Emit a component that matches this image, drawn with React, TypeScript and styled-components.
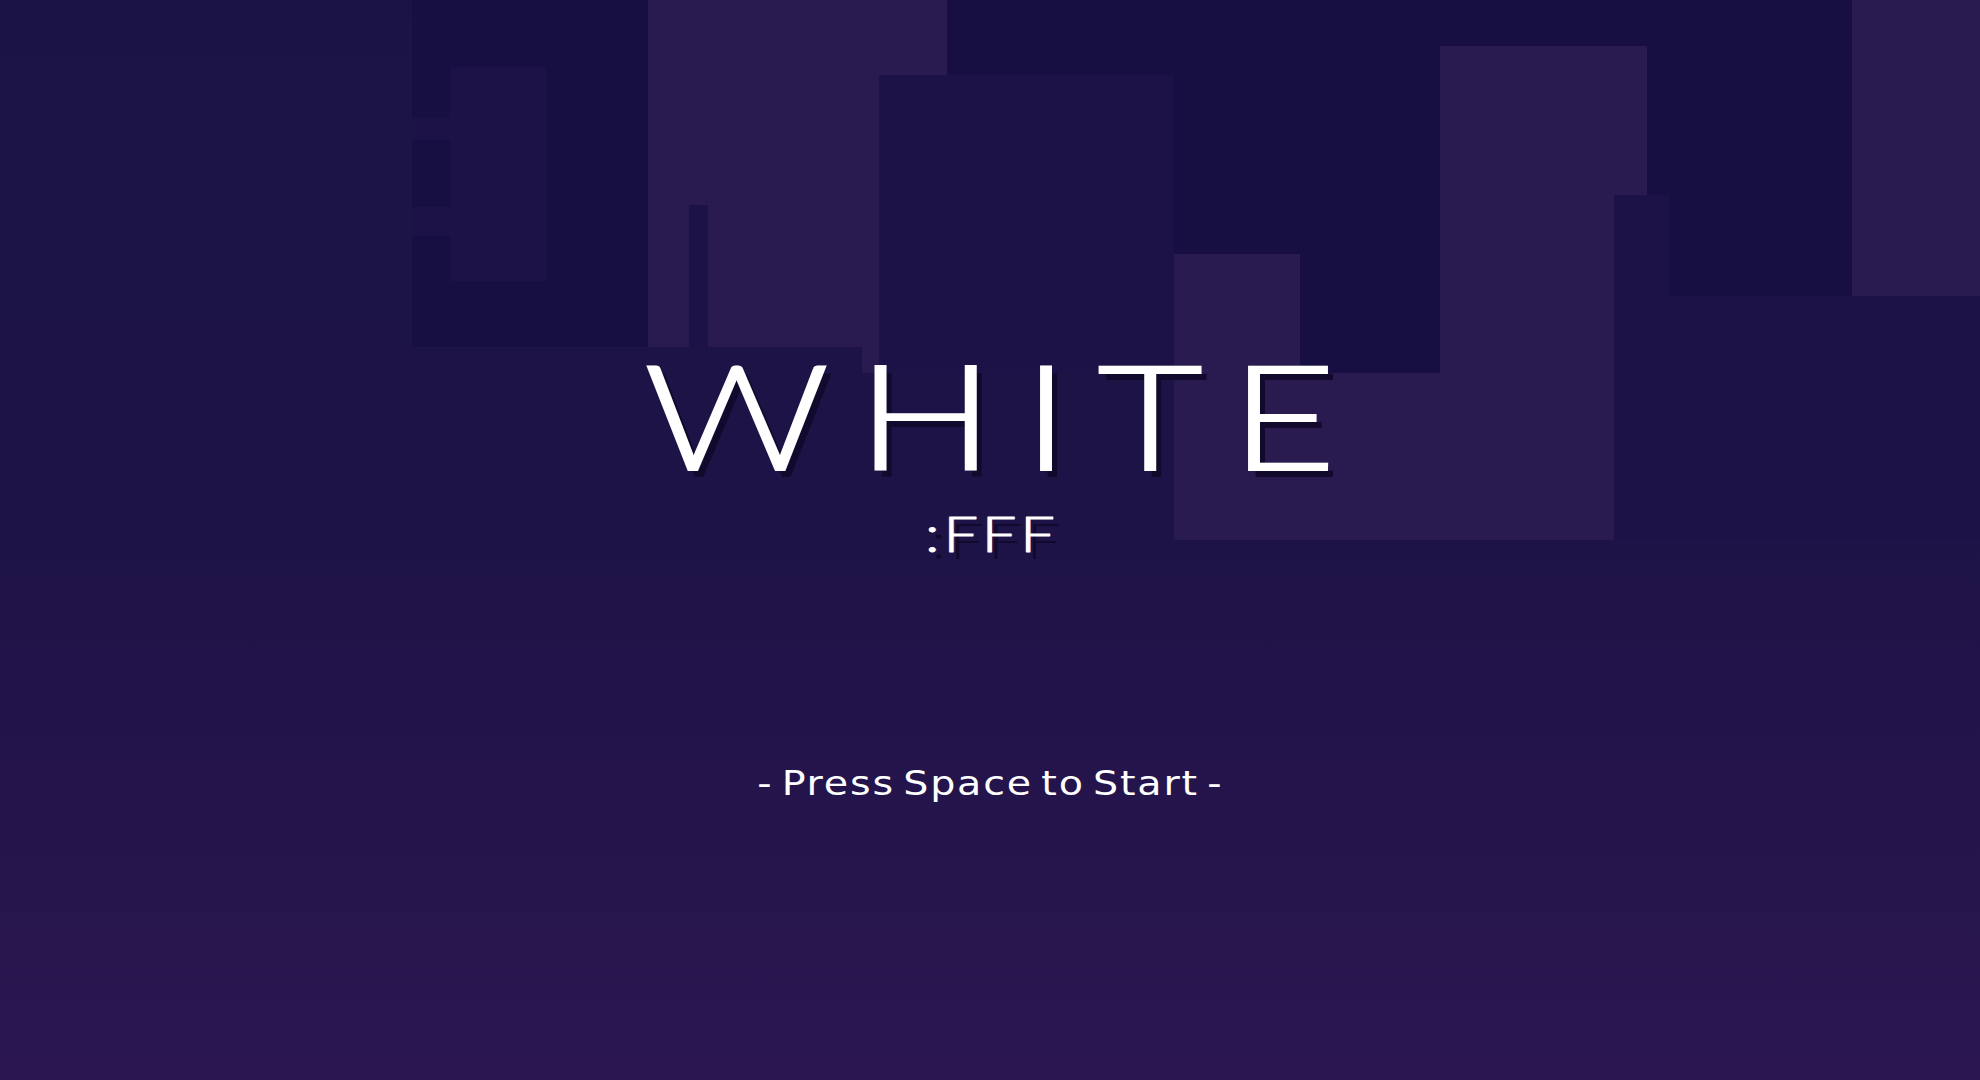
import React from "react";
import styled, { createGlobalStyle } from "styled-components";

const GlobalStyle = createGlobalStyle`
  html, body {
    margin: 0;
    padding: 0;
    background: #1b1346;
    overflow: hidden;
  }
  * { box-sizing: border-box; }
`;

type Tone = "dark" | "light" | "mid";

const toneColor: Record<Tone, string> = {
  dark: "#170e41",
  light: "#291a4f",
  mid: "#1d1247",
};

const Screen = styled.main`
  position: relative;
  width: 100vw;
  height: 100vh;
  overflow: hidden;
  background: linear-gradient(180deg, #1b1346 0%, #1e1347 50%, #2b1651 100%);
`;

const Skyline = styled.div`
  position: absolute;
  inset: 0;
  pointer-events: none;
`;

const Block = styled.div<{ $x: number; $y: number; $w: number; $h: number; $tone: Tone }>`
  position: absolute;
  left: ${(p) => p.$x}px;
  top: ${(p) => p.$y}px;
  width: ${(p) => p.$w}px;
  height: ${(p) => p.$h}px;
  background: ${(p) => toneColor[p.$tone]};
`;

const Content = styled.section`
  position: relative;
  z-index: 1;
  display: flex;
  flex-direction: column;
  align-items: center;
  padding-top: 341px;
`;

const Title = styled.h1`
  margin: 0;
  padding-left: 22px;
  font-family: Lato, "Open Sans", sans-serif;
  font-weight: 300;
  font-size: 146px;
  line-height: 146px;
  letter-spacing: 22px;
  color: #ffffff;
  -webkit-text-stroke: 2px #ffffff;
  transform: scaleX(1.25);
  text-shadow: 5px 7px 0 #120a2c;
`;

const Code = styled.div`
  margin-top: 22px;
  padding-left: 3px;
  font-family: Lato, "Open Sans", sans-serif;
  font-weight: 300;
  font-size: 49px;
  line-height: 49px;
  letter-spacing: 3px;
  color: #ffffff;
  -webkit-text-stroke: 0.8px #ffffff;
  transform: scaleX(1.25);
  text-shadow: -1px 0 0 rgba(110, 150, 255, 0.7), 1px 0 0 rgba(255, 110, 90, 0.6), 5px 7px 0 #120a2c;
`;

const Prompt = styled.p`
  margin: 209px 0 0;
  font-family: "DejaVu Sans", Verdana, sans-serif;
  font-weight: 400;
  font-size: 33px;
  line-height: 33px;
  letter-spacing: 1.5px;
  word-spacing: -5px;
  color: #ffffff;
  transform: scaleX(1.2);
`;

const blocks: { x: number; y: number; w: number; h: number; tone: Tone }[] = [
  { x: 947, y: 0, w: 1033, h: 373, tone: "dark" },
  { x: 412, y: 0, w: 236, h: 347, tone: "dark" },
  { x: 648, y: 0, w: 299, h: 347, tone: "light" },
  { x: 862, y: 300, w: 40, h: 73, tone: "light" },
  { x: 689, y: 205, w: 19, h: 142, tone: "mid" },
  { x: 450, y: 67, w: 96, h: 214, tone: "mid" },
  { x: 412, y: 118, w: 38, h: 22, tone: "mid" },
  { x: 412, y: 207, w: 38, h: 29, tone: "mid" },
  { x: 879, y: 75, w: 295, h: 298, tone: "mid" },
  { x: 1174, y: 254, w: 126, h: 286, tone: "light" },
  { x: 1174, y: 373, w: 440, h: 167, tone: "light" },
  { x: 1440, y: 46, w: 207, h: 494, tone: "light" },
  { x: 1614, y: 195, w: 56, h: 345, tone: "mid" },
  { x: 1670, y: 296, w: 310, h: 244, tone: "mid" },
  { x: 1852, y: 0, w: 128, h: 296, tone: "light" },
];

export default function App() {
  return (
    <>
      <GlobalStyle />
      <Screen>
        <Skyline>
          {blocks.map((b, i) => (
            <Block key={i} $x={b.x} $y={b.y} $w={b.w} $h={b.h} $tone={b.tone} />
          ))}
        </Skyline>
        <Content>
          <Title>WHITE</Title>
          <Code>:FFF</Code>
          <Prompt>- Press Space to Start -</Prompt>
        </Content>
      </Screen>
    </>
  );
}
